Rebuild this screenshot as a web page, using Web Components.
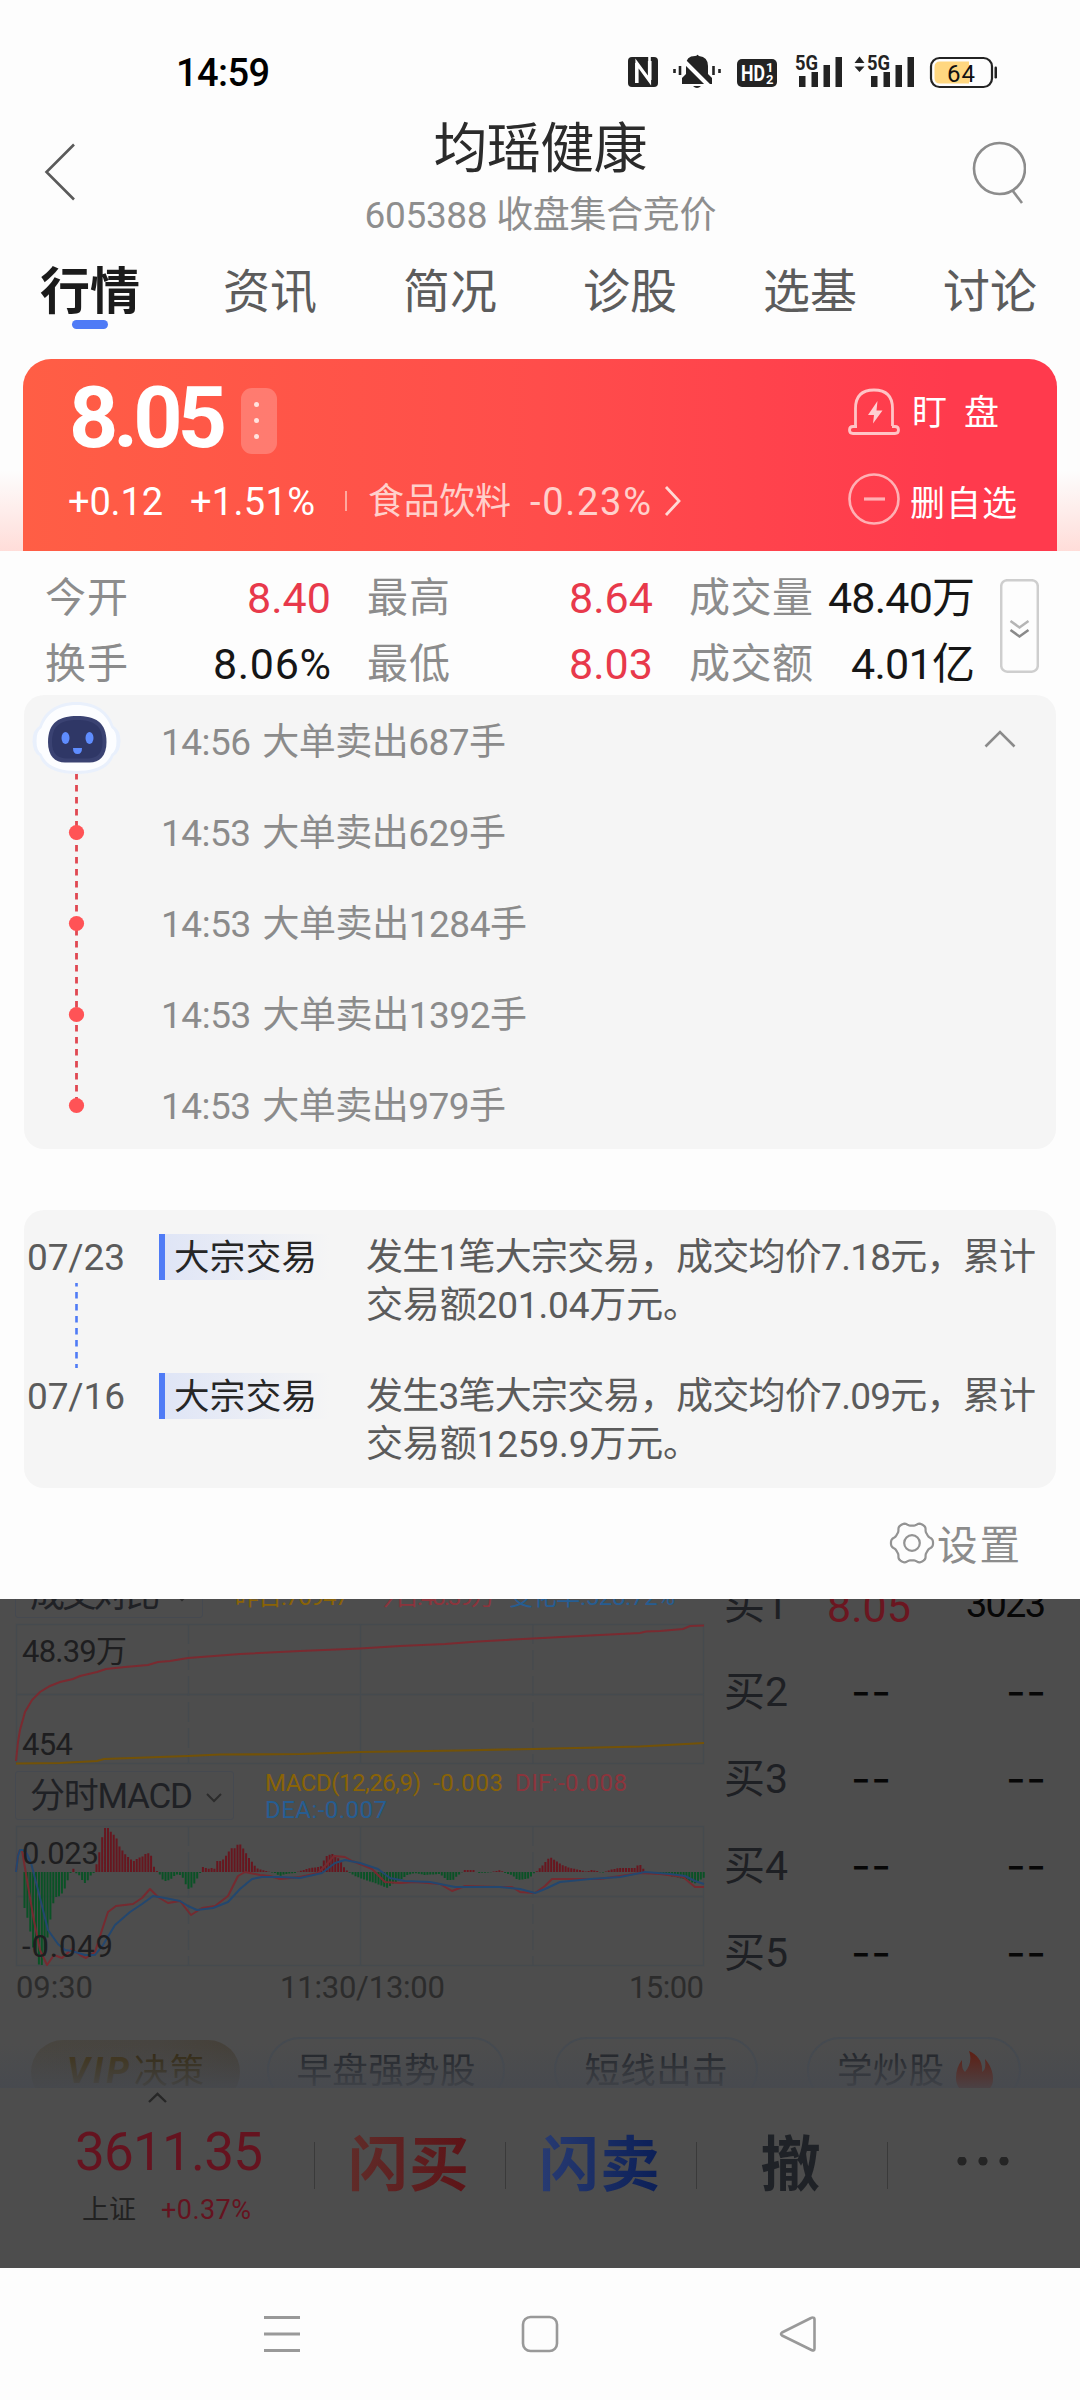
<!DOCTYPE html>
<html lang="zh-CN">
<head>
<meta charset="utf-8">
<title>均瑶健康 605388</title>
<style>
html,body{margin:0;padding:0;background:#fdfdfd}
body{width:1080px;height:2400px;overflow:hidden;font-family:Roboto,"Noto Sans CJK SC",sans-serif;color:#1a1a1a}
</style>
</head>
<body>
<stock-page></stock-page>
<script>
const BASE = '*{box-sizing:border-box}svg{display:block;flex:none}';
function component(name, css, html, after) {
  customElements.define(name, class extends HTMLElement {
    connectedCallback() {
      if (this.shadowRoot) return;
      const root = this.attachShadow({mode: 'open'});
      const tpl = document.createElement('template');
      tpl.innerHTML = '<style>' + BASE + css + '</style>' + (typeof html === 'function' ? html(this) : html);
      root.appendChild(tpl.content.cloneNode(true));
      if (after) after(this, root);
    }
  });
}

/* Text run that spreads its letters over an exact width */
component('fit-text', ':host{display:block;flex:none;white-space:nowrap}span{display:inline-block}', '<span><slot></slot></span>',
  (el, root) => {
    const w = +el.getAttribute('w');
    const span = root.querySelector('span');
    const natural = span.getBoundingClientRect().width;
    const n = el.textContent.length;
    if (w && n > 1) span.style.letterSpacing = ((w - natural) / (n - 1)).toFixed(3) + 'px';
    if (w) el.style.width = w + 'px';
  });

component('status-bar', `
:host{display:flex;height:110px;padding:52px 76px 0 176px;justify-content:space-between}
fit-text{font-size:38px;line-height:42px;font-weight:500;color:#000}
svg{margin-top:-2px}`, `
<fit-text w="94">14:59</fit-text>
<svg width="384" height="44" viewBox="620 50 384 44" fill="#232323">
<rect x="628" y="57" width="30" height="30" rx="4"/>
<path d="M637 83V63.500L649.500 80.500V61" fill="none" stroke="#fff" stroke-width="3.200"/>
<path d="M635.600 63v20M651 61v19" stroke="#fff" stroke-width="1"/>
<path d="M649.500 57v6" stroke="#fff" stroke-width="2.600"/>
<path d="M682 84v-6l4-4v-9q0-9 9-9 2 0 2-1t2 1q9 1 9 10v8l4 4v6z"/>
<path d="M693 86h8q-4 4-8 0z"/>
<path d="M683 60L710 87" stroke="#fff" stroke-width="4"/>
<path d="M680 66v9M674.500 69v4M713.500 66v9M719.500 69v4" stroke="#232323" stroke-width="2.600"/>
<rect x="737" y="59" width="40" height="28" rx="5"/>
<text x="741" y="81" font-size="22" font-weight="700" fill="#fff" textLength="24" lengthAdjust="spacingAndGlyphs">HD</text>
<text x="766" y="72" font-size="13" font-weight="700" fill="#fff">1</text>
<text x="766" y="84" font-size="13" font-weight="700" fill="#fff">2</text>
<text x="795" y="69.500" font-size="20" font-weight="700" textLength="23" lengthAdjust="spacingAndGlyphs">5G</text>
<path d="M799 76h6.500v11H799zM811.500 72h6.500v15h-6.500zM823.500 65h6.500v22h-6.500zM835.500 57h6.500v30h-6.500z"/>
<path d="M854.500 63L859.500 56.500l5 6.500zM854.500 66.500h10L859.500 72z"/>
<text x="867" y="69.500" font-size="20" font-weight="700" textLength="23" lengthAdjust="spacingAndGlyphs">5G</text>
<path d="M871 76h6.500v11H871zM883.500 72h6.500v15h-6.500zM895.500 65h6.500v22h-6.500zM907.500 57h6.500v30h-6.500z"/>
<rect x="931" y="58" width="61" height="29" rx="8.500" fill="none" stroke="#232323" stroke-width="2.200"/>
<path d="M940 61.500h29v22h-29q-5.500 0-5.500-5.500v-11q0-5.500 5.500-5.500z" fill="#ffd780"/>
<rect x="994.500" y="66.500" width="2.500" height="12" rx="1.200"/>
<text x="947" y="81.500" font-size="24" textLength="28" fill="#111">64</text>
</svg>`);

component('page-header', `
:host{display:flex;height:140px;padding:0 54px 0 44px;justify-content:space-between}
.mid{display:flex;flex-direction:column;align-items:center;padding-top:10px;margin-left:33px}
.t{font-size:54px;line-height:60px;color:#2b2b2b}
.s{font-size:37px;line-height:42px;margin-top:15px;color:#8e8e8e}
.back{margin-top:32px}.find{margin-top:30px}`, `
<svg class="back" width="32" height="60" viewBox="44 142 32 60" fill="none" stroke="#5a5a5a" stroke-width="2.600"><path d="M74 144.500L46.500 172 74 199.500"/></svg>
<div class="mid"><fit-text class="t" w="214">均瑶健康</fit-text><fit-text class="s" w="352">605388 收盘集合竞价</fit-text></div>
<svg class="find" width="54" height="66" viewBox="971 140 54 66" fill="none" stroke="#8c8c8c" stroke-width="2.600"><circle cx="998.500" cy="168.500" r="25.500"/><path d="M1011.500 190.500l9.500 12.500"/></svg>`);

component('page-tab', `
:host{display:flex;flex:1;flex-direction:column;align-items:center;font-size:47px;line-height:60px;color:#5c5c5c}
:host([on]){font-size:50px;font-weight:700;color:#1b1b1b}
:host([on])::after{content:"";width:36px;height:9px;border-radius:5px;background:#4f7bf6;margin-top:-2px}`, '<slot></slot>');

component('tab-strip', ':host{display:flex;height:109px;padding-top:12px}', `
<page-tab on>行情</page-tab><page-tab>资讯</page-tab><page-tab>简况</page-tab><page-tab>诊股</page-tab><page-tab>选基</page-tab><page-tab>讨论</page-tab>`);

component('quote-card', `
:host{display:block;height:192px;padding:0 23px;overflow:hidden;background:linear-gradient(180deg,#fff0 58%,#ffddd9 100%)}
.card{height:192px;border-radius:28px 28px 0 0;background:linear-gradient(90deg,#ff5e45 0%,#ff4d4b 50%,#ff3a4d 90%);display:flex;justify-content:space-between;color:#fff}
.l{padding:18px 0 0 45px}.top{display:flex;align-items:center}
.p{font-size:86px;line-height:82px;font-weight:700;margin-left:1px}
.more{display:flex;flex-direction:column;align-items:center;justify-content:center;gap:11px;width:36px;height:66px;border-radius:11px;background:#ffffff38;margin:5px 0 0 14px;padding-right:6px}
.more i{width:5px;height:5px;border-radius:50%;background:#ffe3df}
.row{display:flex;align-items:center;font-size:38px;line-height:46px;margin-top:20px}
.dim{color:#ffd0cb}.row i{width:2px;height:20px;background:#ffa99f;margin:-3px 21px 0 30px}
.r{width:209px;padding-top:27px}
.a{display:flex;align-items:center;font-size:35px;line-height:46px}`, `
<div class="card"><div class="l">
<div class="top"><fit-text class="p" w="158">8.05</fit-text><div class="more"><i></i><i></i><i></i></div></div>
<div class="row"><fit-text w="95">+0.12</fit-text><fit-text w="125" style="margin-left:27px">+1.51%</fit-text><i></i>
<fit-text class="dim" w="143" style="font-size:36px">食品饮料</fit-text><fit-text class="dim" w="121" style="margin-left:19px">-0.23%</fit-text>
<svg style="margin:-2px 0 0 13px" width="18" height="32" viewBox="0 0 18 32" fill="none" stroke="#ffd9d5" stroke-width="2.800"><path d="M2 2l13 14L2 30"/></svg></div></div>
<div class="r"><div class="a">
<svg width="52" height="48" viewBox="848 386 52 48" fill="none" stroke="#ffc4c6" stroke-width="2.800"><path d="M855.500 424V406.500q0-18.500 18.500-18.500t18.500 18.500V424M853 424.500q-3.500 0-3.500 3.500t3.500 3.500h42q3.500 0 3.500-3.500t-3.500-3.500h-3M853 424.500h4"/><path d="M877.500 399l-9.500 14h6l-1 8.500 9.500-13h-6z" fill="#ffd0d2" stroke="none"/></svg>
<fit-text w="87" style="margin:5px 0 0 12px">盯&nbsp;&nbsp;盘</fit-text></div>
<div class="a" style="margin-top:32px">
<svg width="52" height="52" viewBox="848 472 52 52" fill="none" stroke="#ffb0b4" stroke-width="2.600"><circle cx="874" cy="498" r="24.500"/><path d="M864 498h21" stroke-width="3.200"/></svg>
<fit-text w="107" style="margin:13px 0 0 10px">删自选</fit-text></div></div></div>`);

component('quote-stats', `
:host{display:flex;height:144px;padding:15px 41px 0 45px;justify-content:space-between}
.g{display:grid;width:930px;grid-template-columns:286px 36px 286px 36px 286px;grid-auto-rows:66px}
.c{display:flex;justify-content:space-between;font-size:43px;line-height:65px;color:#161616}
.c>:first-child{font-size:41px;color:#8c8c8c}.red{color:#e8394b}
svg{margin-top:13px}`, `
<div class="g">
<div class="c"><fit-text w="83">今开</fit-text><fit-text class="red" w="84">8.40</fit-text></div><b></b>
<div class="c"><fit-text w="83">最高</fit-text><fit-text class="red" w="84">8.64</fit-text></div><b></b>
<div class="c"><fit-text w="124">成交量</fit-text><fit-text w="147">48.40万</fit-text></div>
<div class="c"><fit-text w="83">换手</fit-text><fit-text w="118">8.06%</fit-text></div><b></b>
<div class="c"><fit-text w="83">最低</fit-text><fit-text class="red" w="84">8.03</fit-text></div><b></b>
<div class="c"><fit-text w="124">成交额</fit-text><fit-text w="124">4.01亿</fit-text></div>
</div>
<svg width="39" height="94" viewBox="0 0 39 94" fill="none" stroke-width="2.500"><rect x="1.200" y="1.200" width="36.600" height="91.500" rx="6" stroke="#cecece"/><path d="M10.500 42l9 6.500 9-6.500" stroke="#b5b5b5"/><path d="M10.500 51l9 6.500 9-6.500" stroke="#8a8a8a"/></svg>`);

component('alert-row', `
:host{display:flex;height:91px;align-items:center;padding-left:137px;font-size:37px;line-height:46px;color:#8b8b8b;word-spacing:3px}
fit-text{margin-top:3px}`, el => `<fit-text w="${el.getAttribute('w')}">${el.textContent}</fit-text>`);

component('alert-timeline', `
:host{display:flex;height:454px;margin:0 24px;border-radius:20px;background:#f5f5f5;overflow:hidden}
.rail{width:0;overflow:visible}.rows{flex:1;padding-top:1px}.up{margin:34px 39px 0 0}`, `
<div class="rail"><svg width="110" height="454" viewBox="24 695 110 454">
<path d="M76.500 773V1112" stroke="#e04852" stroke-width="2.800" stroke-dasharray="6.500 5.500"/>
<g fill="#ff5356"><circle cx="76.500" cy="832.500" r="7.600"/><circle cx="76.500" cy="923.500" r="7.600"/><circle cx="76.500" cy="1014.500" r="7.600"/><circle cx="76.500" cy="1105.500" r="7.600"/></g>
<path d="M76.500 702c20 0 33 10 37 24q7 4 7 15t-7 15c-4 12-17 18-37 18s-33-6-37-18q-7-4-7-15t7-15c4-14 17-24 37-24z" fill="#e9f0fc"/>
<path d="M76.500 705c19 0 30 9 35 23q5 3 5 13t-5 13c-5 12-17 17-35 17s-30-5-35-17q-5-3-5-13t5-13c5-14 16-23 35-23z" fill="#fcfdff"/>
<path d="M77 716c18 0 29.500 6 29.500 26 0 14-7 20.500-17 20.500H65c-10 0-17-6.500-17-20.500 0-20 12-26 29-26z" fill="#3a4272"/>
<path d="M77 720c16 0 25.500 5 25.500 22 0 12-6 16.500-15 16.500H67c-9 0-15-4.500-15-16.500 0-17 9-22 25-22z" fill="#2f3766"/>
<g fill="#5f8dff"><ellipse cx="65.500" cy="738" rx="4" ry="6"/><ellipse cx="89.500" cy="738" rx="4" ry="6"/><path d="M73 748h9q0 6-4.500 6t-4.500-6z"/></g>
</svg></div>
<div class="rows">
<alert-row w="345">14:56 大单卖出687手</alert-row>
<alert-row w="345">14:53 大单卖出629手</alert-row>
<alert-row w="366">14:53 大单卖出1284手</alert-row>
<alert-row w="366">14:53 大单卖出1392手</alert-row>
<alert-row w="345">14:53 大单卖出979手</alert-row></div>
<svg class="up" width="34" height="20" viewBox="0 0 34 20" fill="none" stroke="#8b8b8b" stroke-width="2.600"><path d="M2.500 17.500L17 3l14.500 14.500"/></svg>`);

component('event-row', `
:host{display:flex;height:139px;font-size:37px;line-height:48px;color:#5b5b5b}
.d{display:flex;flex-direction:column;width:135px;padding-left:3px}.d svg{margin:1px 0 0 47px}
.tag{width:207px;height:46px;margin-top:0;border-left:6.500px solid #4f7bf6;background:linear-gradient(90deg,#dfe5f6,#f5f5f500 165px);padding-left:9px;font-size:35.500px;line-height:48px;color:#262626}`,
  el => {
    const a = n => el.getAttribute(n);
    return `<div class="d"><fit-text w="98">${a('date')}</fit-text>${a('linked') !== null ? '<svg width="6" height="88" viewBox="0 0 6 88"><path d="M2.500 0v85" stroke="#4f7bf6" stroke-width="2.600" stroke-dasharray="6.500 5.500" stroke-dashoffset="3"/></svg>' : ''}</div>
<div class="tag"><fit-text w="143">大宗交易</fit-text></div>
<div><fit-text w="670">${a('one')}</fit-text><fit-text w="${a('w2')}">${a('two')}</fit-text></div>`;
  });

component('event-card', ':host{display:block;height:278px;margin:61px 24px 0;padding-top:24px;border-radius:20px;background:#f5f5f5}', `
<event-row linked date="07/23" one="发生1笔大宗交易，成交均价7.18元，累计" two="交易额201.04万元。" w2="334"></event-row>
<event-row date="07/16" one="发生3笔大宗交易，成交均价7.09元，累计" two="交易额1259.9万元。" w2="334"></event-row>`);

component('settings-link', ':host{display:flex;height:111px;padding:32px 60px 0 0;justify-content:flex-end;font-size:40.500px;line-height:52px;color:#8c8c8c}fit-text{margin-left:2px}', `
<svg width="46" height="46" viewBox="-23 -23 46 46" fill="none" stroke="#939393" stroke-width="2.200"><circle r="7.800"/><path id="g"/></svg><fit-text w="83">设置</fit-text>`,
  (el, root) => {
    let d = '';
    for (let i = 0; i <= 120; i++) {
      const t = i / 120 * Math.PI * 2, c = Math.cos(6 * t);
      const r = 19.2 + 2 * Math.tanh(c * 1.6);
      d += (i ? 'L' : 'M') + (r * Math.cos(t)).toFixed(2) + ' ' + (r * Math.sin(t)).toFixed(2);
    }
    root.getElementById('g').setAttribute('d', d + 'Z');
  });

const smooth = pts => 'M' + pts.map(p => p.join(' ')).join('L');
const pairs = s => s.trim().split(/\s+/).map(p => p.split(',').map(Number));

component('volume-chart', ':host{display:block;height:144px}', `
<svg width="712" height="144" viewBox="0 1622 712 144" fill="none" font-size="31">
<g stroke="#454a4e" stroke-width="1.300"><rect x="16.500" y="1624.500" width="687" height="139"/><path d="M16 1694.500H704M360.500 1624V1764"/><path d="M188.500 1624V1764M533 1624V1764" stroke-dasharray="20 6"/></g>
<path d="${smooth(pairs('16,1761 18,1742 20,1730 25,1712 32,1700 40,1692 50,1686 60,1682 73,1679 80,1676 97,1672 106,1669 125,1667 148,1665 158,1662 170,1661 188,1658 240,1654 300,1651 360,1648.5 400,1646 445,1644 478,1641.5 533,1638.5 590,1635.5 640,1633 646,1631.500 660,1631 683,1629 690,1626 704,1625.5'))}" stroke="#7a2a30" stroke-width="2"/>
<path d="${smooth(pairs('16,1763.5 60,1763 97,1761 104,1759 188,1756 220,1754.5 300,1754 360,1752 460,1750.5 533,1749 640,1746.5 704,1743'))}" stroke="#735207" stroke-width="2.200"/>
<g fill="#1e1e20"><text x="22" y="1662" textLength="105">48.39万</text><text x="22" y="1755" textLength="51">454</text></g></svg>`);

component('macd-chart', ':host{display:block;height:144px}', () => {
  const env = pairs(`23,-31 27,-44 30,-58 33,-75 36,-83 39,-93 42,-93 44,-88 46,-75 50,-50 53,-32 56,-25 60,-24 63,-20 66,-14 68,-7 70,-2 73,4 76,-1 79,-3 82,-8 85,-11 88,-8 91,-3 94,-.5 96,6 99,18 102,34 105,44 108,44 111,40 114,37 117,33 119,26 122,22 125,18 130,13 134,11 138,14 142,15 145,18 148,19 151,17 153,7 156,2 159,-1 162,-7 165,-9 170,-8 174,-4 178,-2 182,-4 185,-11 188,-17 191,-16 194,-12 197,-7 200,-1 203,5 208,3 212,4 215,3 217,11 222,11 225,15 228,19 231,24 234,23 237,27 240,28 243,24 246,19 249,14 252,10 255,6 258,3 262,2 268,.5 275,-1 280,-4 285,-2 295,-1 300,1 310,4 318,5 322,6 325,15 328,17 333,18 337,15 340,12 343,6 346,2 350,-1 355,-4 365,-8 375,-11 385,-15 388,-16 392,-12 400,-8 407,-3 415,-1 425,-3 440,-2 447,-8 453,-8 457,-4 461,-1 465,2 475,2 477,-1 490,-.5 500,2 505,-1 512,-3 518,-8 525,-7 530,-6 533,-2 537,1 542,6 548,13 550,15 556,11 562,7 570,4 580,2 586,.5 592,2 597,1 602,-1 610,2 618,4 635,4 638,7 642,7 644,1 646,-1 660,-2 670,-4 680,-6 690,-9 694,-12 700,-8 705,-5`);
  const at = x => { let i = 1; while (i < env.length - 1 && env[i][0] < x) i++; const [a, b] = [env[i - 1], env[i]]; return a[1] + (b[1] - a[1]) * (x - a[0]) / (b[0] - a[0]); };
  let up = '', dn = '';
  for (let x = 24.5; x < 704; x += 2.878) { const v = at(x); const s = `M${x.toFixed(1)} 1872v${(-v).toFixed(1)}`; if (v > 0) up += s; else dn += s; }
  return `<svg width="712" height="144" viewBox="0 1824 712 144" fill="none" font-size="31">
<g stroke="#454a4e" stroke-width="1.300"><rect x="16.500" y="1826.500" width="687" height="139"/><path d="M16 1896.500H704M360.500 1826V1966"/><path d="M188.500 1826V1966M533 1826V1966" stroke-dasharray="20 6"/></g>
<path d="${up}" stroke="#68161f" stroke-width="2"/><path d="${dn}" stroke="#0a5226" stroke-width="2"/>
<path d="${smooth(pairs('16,1872 18,1855 20,1850 22,1850 27,1880 34,1921 40,1950 47,1965 54,1955 62,1958 72,1949 80,1955 86,1958 95,1952 102,1930 108,1912 116,1906 133,1904 142,1898 150,1889 158,1897 168,1903 180,1901 191,1915 202,1908 215,1906 228,1896 238,1876 245,1872 260,1875 270,1876 280,1879 300,1877 318,1873 326,1865 334,1856 345,1857 352,1861 360,1864 372,1869 385,1882 400,1883 415,1882 440,1884 452,1891 465,1886 500,1887 512,1887 520,1892 535,1893 545,1886 552,1879 570,1879 600,1879 620,1876 640,1873 660,1874 683,1877 695,1887 704,1887'))}" stroke="#752a30" stroke-width="2" stroke-linejoin="round"/>
<path d="${smooth(pairs('16,1872 18,1856 20,1850 23,1850 27,1854 31,1863 38,1890 48,1930 58,1944 65,1950 72,1951 85,1955 95,1955 103,1945 115,1925 130,1912 142,1904 153,1896 165,1898 180,1901 188,1906 197,1910 213,1908 228,1902 240,1889 252,1879 262,1877 280,1877 300,1878 322,1873 335,1863 345,1860 360,1863 378,1869 390,1878 405,1881 430,1882 455,1887 500,1887 520,1889 535,1893 545,1889 560,1882 590,1879 620,1877 645,1872 670,1874 685,1876 695,1881 704,1884'))}" stroke="#23476f" stroke-width="2" stroke-linejoin="round"/>
<g fill="#1e1e20"><text x="22" y="1864" textLength="77">0.023</text><text x="22" y="1957" textLength="91">-0.049</text></g></svg>`;
});

component('chart-panel', `
:host{display:block;width:712px;height:412px;overflow:hidden;font-size:24px}
.h{display:flex;height:23px}
.sel{display:flex;border:1.500px solid #454950;border-radius:3px;color:#1f2125;font-size:35px;padding-left:14px;margin-left:15px}
.sel svg{margin-left:13px}
.h .sel{width:188px;height:50px;margin-top:-31px;line-height:53px}
.h .k{display:flex;margin:-17px 0 0 32px;line-height:30px}
.m{display:flex;height:58px;padding-top:5px}.m .sel{width:219px;height:49px;line-height:49px}
.y{color:#8a6306}.r{color:#8c343c}.b{color:#265d92}
.k2{padding-left:31px;line-height:27px;margin-top:-1px}.k2 div{display:flex}
.x{display:flex;justify-content:space-between;padding:2px 8px 0 16px;font-size:31px;line-height:36px;color:#2c2c2c}`, `
<div class="h"><div class="sel"><fit-text w="130">成交对比</fit-text><svg style="margin:23px 0 0 14px" width="17" height="10" viewBox="0 0 17 10" fill="none" stroke="#2c2c2c" stroke-width="2"><path d="M1 1l7 7 7-7"/></svg></div>
<div class="k"><fit-text class="y" w="114">昨日:76947</fit-text><fit-text class="r" w="122" style="margin-left:24px">今日:48.39万</fit-text><fit-text class="b" w="166" style="margin-left:14px">变化率:528.72%</fit-text></div></div>
<volume-chart></volume-chart>
<div class="m"><div class="sel"><fit-text w="163">分时MACD</fit-text><svg style="margin-top:21px" width="17" height="10" viewBox="0 0 17 10" fill="none" stroke="#2c2c2c" stroke-width="2"><path d="M1 1l7 7 7-7"/></svg></div>
<div class="k2"><div><fit-text class="y" w="156">MACD(12,26,9)</fit-text><fit-text class="y" w="70" style="margin-left:12px">-0.003</fit-text><fit-text class="r" w="112" style="margin-left:12px">DIF:-0.008</fit-text></div><div><fit-text class="b" w="122">DEA:-0.007</fit-text></div></div></div>
<macd-chart></macd-chart>
<div class="x"><fit-text w="77">09:30</fit-text><fit-text w="165" style="margin-left:3px">11:30/13:00</fit-text><fit-text w="75">15:00</fit-text></div>`);

component('order-book', `
:host{display:block;flex:1;height:412px;overflow:hidden}
.b{margin-top:-37px}
.o{display:grid;grid-template-columns:104px 97px 1fr;height:87px;line-height:87px;font-size:43px;padding:0 34px 0 12px;color:#070707}
.o>:nth-child(2),.o>:nth-child(3){justify-self:end}
.n{font-size:41px;color:#1e2024}
.d{font-family:Inter,Roboto,sans-serif;font-size:43px;line-height:85px}`,
  `<div class="b"><div class="o"><fit-text class="n" w="64">买1</fit-text><fit-text w="84" style="color:#6b1620;margin-right:14px;line-height:90px">8.05</fit-text><fit-text w="80" style="font-size:38px;line-height:84px">3023</fit-text></div>` +
  [2, 3, 4, 5].map(i => `<div class="o"><fit-text class="n" w="64">买${i}</fit-text><fit-text class="d" w="40" style="margin-right:34px">--</fit-text><fit-text class="d" w="40">--</fit-text></div>`).join('') + '</div>');

component('topic-chip', `
:host{display:flex;flex:none;height:66px;border:2px solid #454a50;border-radius:33px;justify-content:center;line-height:65px;font-size:35.500px;color:#1e2126}
:host([vip]){border:0;height:64px;margin-top:3px;background:linear-gradient(90deg,#48453f,#474440 60%,#454038);color:#33270c;line-height:62px}`, '<slot></slot>');

component('topic-chips', `
:host{display:flex;height:77px;padding:26px 59px 0 31px;overflow:hidden;justify-content:space-between;position:relative}
.f{position:absolute;left:0;right:0;bottom:0;height:44px;background:linear-gradient(180deg,#474a5000,#46494fd8 100%)}`, `
<topic-chip vip style="width:209px"><fit-text w="62" style="font-weight:700;font-style:italic;font-size:36px;color:#3f3112">VIP</fit-text><fit-text w="70" style="margin-left:5px;font-size:34px">决策</fit-text></topic-chip>
<topic-chip style="width:238px"><fit-text w="179">早盘强势股</fit-text></topic-chip>
<topic-chip style="width:204px;margin-left:22px"><fit-text w="143">短线出击</fit-text></topic-chip>
<topic-chip style="width:214px;margin-left:22px"><fit-text w="107" style="margin-left:4px">学炒股</fit-text><svg style="margin:12px 0 0 11px" width="40" height="44" viewBox="0 0 40 44"><path d="M14 0c9 4 14 11 13 21 3-2 4-5 3-13 5 6 8 12 8 20C38 38 30 44 20 44S1 38 1 27C1 20 3 14 7 9c0 6 0 9 3 12 5-6 7-13 4-21z" fill="#62180a"/></svg></topic-chip>
<div class="f"></div>`);

component('trade-bar', `
:host{display:flex;height:180px;background:#4d4d4d}
.i{width:314px;display:flex;flex-direction:column;color:#65131f}
.n{font-size:53px;line-height:60px;margin:19px 0 0 75px}
.s{display:flex;font-size:27px;line-height:36px;margin:10px 0 0 82px}
.c{width:190px;display:flex;justify-content:center;align-items:center;height:140px;padding:15px 3px 0 0;font-size:60px;font-weight:700;line-height:80px}
.c fit-text{-webkit-background-clip:text;background-clip:text;color:transparent}
hr{width:1px;height:47px;border:0;margin:54px 0 0;background:#3a3a3a}`, `
<div class="i"><svg style="margin:4px 0 0 147px" width="21" height="11" viewBox="0 0 21 11" fill="none" stroke="#272727" stroke-width="2.400"><path d="M2 10l8.500-8 8.500 8"/></svg>
<fit-text class="n" w="188">3611.35</fit-text><div class="s"><fit-text w="54" style="color:#222">上证</fit-text><fit-text w="90" style="margin-left:25px">+0.37%</fit-text></div></div>
<hr><div class="c"><fit-text w="121" style="background-image:linear-gradient(90deg,#602c29,#5d1317)">闪买</fit-text></div>
<hr><div class="c"><fit-text w="121" style="background-image:linear-gradient(90deg,#283b72,#0b1f57)">闪卖</fit-text></div>
<hr><div class="c"><fit-text w="60" style="background-image:linear-gradient(#1f2227,#1f2227)">撤</fit-text></div>
<hr><div class="c" style="padding:9px 0 0"><svg width="54" height="12" viewBox="0 0 54 12" fill="#252525"><circle cx="6" cy="4" r="4.600"/><circle cx="27" cy="4" r="4.600"/><circle cx="48" cy="4" r="4.600"/></svg></div>`);

component('market-backdrop', ':host{display:block;height:669px;background:#4d4d4d;overflow:hidden}.r{display:flex;height:412px}', `
<div class="r"><chart-panel></chart-panel><order-book></order-book></div>
<topic-chips></topic-chips><trade-bar></trade-bar>`);

component('nav-bar', ':host{display:flex;height:132px;background:#fdfdfd;align-items:flex-start;justify-content:space-between;padding:46px 262px 0 262px}', `
<svg width="40" height="40" viewBox="0 0 40 40" stroke="#999" stroke-width="2.800"><path d="M2 3.500h36M2 20h36M2 36.500h36"/></svg>
<svg width="40" height="40" viewBox="0 0 40 40" fill="none" stroke="#999" stroke-width="2.600"><rect x="3" y="3" width="34" height="34" rx="7.500"/></svg>
<svg width="40" height="40" viewBox="0 0 40 40" fill="none" stroke="#999" stroke-width="2.600" stroke-linejoin="round"><path d="M34.500 3.500q2 0 2 2v29q0 3-3 1.500L4 21.500q-2-1.500 0-3L33 4q1-.6 1.500-.5z"/></svg>`);

component('stock-page', ':host{display:flex;flex-direction:column;width:1080px;height:2400px}:host>*{flex:none}', `
<status-bar></status-bar><page-header></page-header><tab-strip></tab-strip><quote-card></quote-card><quote-stats></quote-stats>
<alert-timeline></alert-timeline><event-card></event-card><settings-link></settings-link><market-backdrop></market-backdrop><nav-bar></nav-bar>`);
</script>
</body>
</html>
